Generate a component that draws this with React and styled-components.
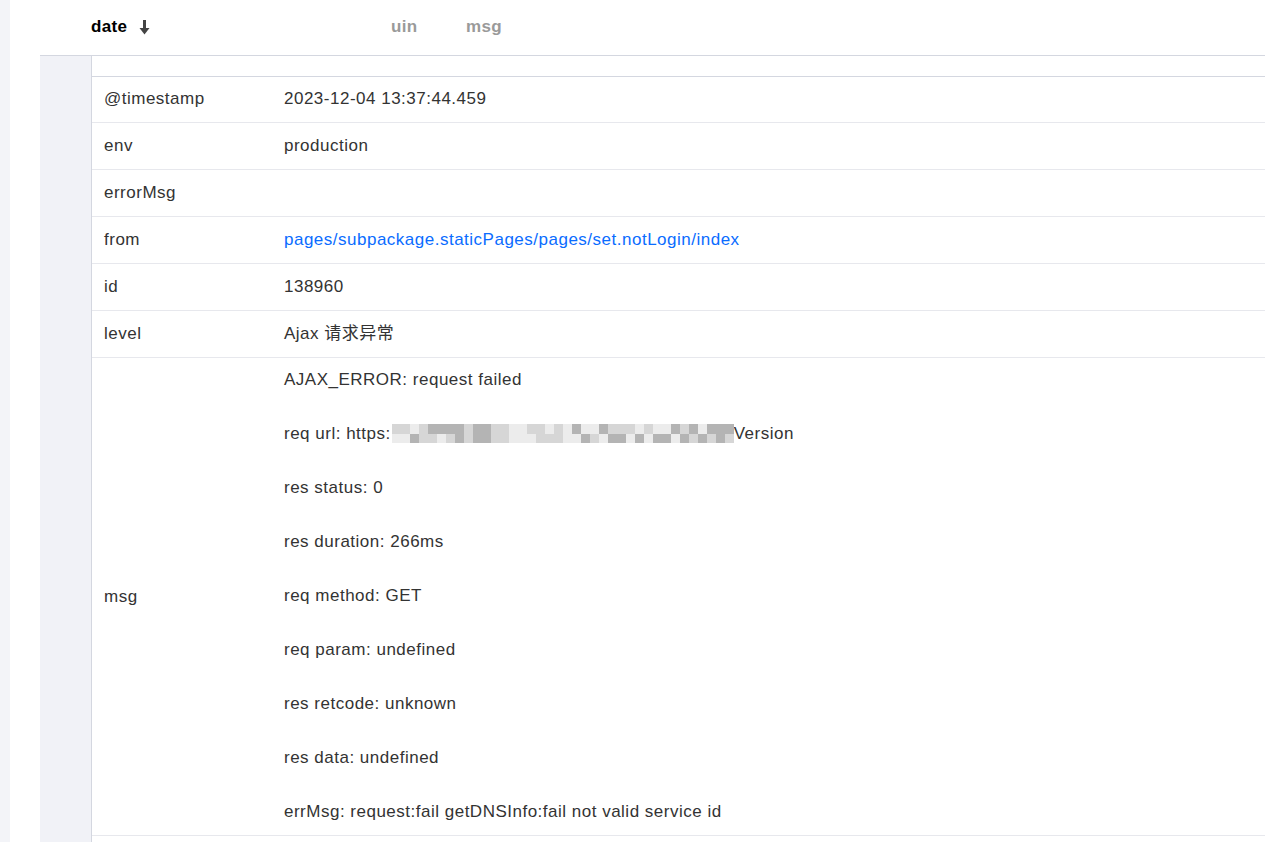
import React from "react";
import styled, { createGlobalStyle } from "styled-components";

const GlobalStyle = createGlobalStyle`
  html, body {
    margin: 0;
    padding: 0;
    background: #ffffff;
    font-family: "Liberation Sans", Arial, "Noto Sans CJK SC", sans-serif;
    color: #333333;
  }
`;

const Page = styled.div`
  display: flex;
  min-height: 842px;
  background: #fff;
`;

const SideStrip = styled.div`
  width: 10px;
  flex-shrink: 0;
  background: #f3f4f8;
`;

const Content = styled.div`
  flex: 1;
  padding-left: 30px;
  display: flex;
  flex-direction: column;
`;

const HeaderBar = styled.div`
  height: 55px;
  border-bottom: 1px solid #d4d7e0;
  display: flex;
  align-items: center;
  padding-left: 51px;
  font-size: 17px;
  letter-spacing: 0.3px;
  font-weight: bold;
`;

const HeadCell = styled.div`
  display: flex;
  align-items: center;
  gap: 12px;
  width: ${(p) => p.$width}px;
  color: ${(p) => (p.$active ? "#000000" : "#9a9a9a")};
  padding-bottom: 1px;
`;

const Body = styled.div`
  display: flex;
  flex: 1;
`;

const Gutter = styled.div`
  width: 51px;
  flex-shrink: 0;
  background: #f1f2f7;
  border-right: 1px solid #d4d7e0;
`;

const Detail = styled.div`
  flex: 1;
  display: flex;
  flex-direction: column;
`;

const Spacer = styled.div`
  height: 20px;
  border-bottom: 1px solid #d4d7e0;
`;

const Row = styled.div`
  display: flex;
  align-items: center;
  border-bottom: 1px solid #e7e8ed;
  font-size: 17px;
  letter-spacing: 0.5px;
  line-height: 22px;
`;

const Key = styled.div`
  width: 192px;
  flex-shrink: 0;
  padding: ${(p) => (p.$compact ? "11px 12px 12px" : "12px")};
  box-sizing: border-box;
  min-height: ${(p) => (p.$compact ? 45 : 46)}px;
`;

const Value = styled.div`
  flex: 1;
  padding: ${(p) =>
    p.$tall ? "11px 0 12px" : p.$compact ? "11px 0 12px" : "12px 0"};
  min-height: ${(p) => (p.$compact ? 45 : 46)}px;
  box-sizing: border-box;
  color: ${(p) => (p.$link ? "#0a6cff" : "#333333")};
  display: flex;
  flex-direction: column;
  gap: 32px;
`;

const Line = styled.div`
  white-space: nowrap;
`;

const Mosaic = styled.span`
  display: inline-grid;
  grid-template-columns: repeat(38, 9px);
  grid-template-rows: 10px 9px;
  vertical-align: middle;
  margin: 0 0 0 1px;
  position: relative;
  top: -1px;
`;

const Cell = styled.span`
  display: block;
`;

const shades = [
  "#d6d6d6", "#bdbdbd", "#f4f4f4", "#c8c8c8", "#ececec", "#a8a8a8",
  "#cfcfcf", "#dcdcdc", "#b4b4b4", "#fafafa", "#c2c2c2", "#9c9c9c",
];

const MosaicBlock = () => {
  const cells = [];
  let seed = 7;
  for (let i = 0; i < 76; i++) {
    seed = (seed * 1103515245 + 12345) % 2147483648;
    const v = seed % shades.length;
    cells.push(<Cell key={i} style={{ background: shades[v] }} />);
  }
  return <Mosaic>{cells}</Mosaic>;
};

const SortArrow = () => (
  <svg width="11" height="15" viewBox="0 0 11 15">
    <rect x="4" y="0" width="3" height="9" fill="#444" />
    <path d="M0.5 8 L10.5 8 L5.5 14.5 Z" fill="#444" />
  </svg>
);

const rows = [
  { k: "@timestamp", v: "2023-12-04 13:37:44.459" },
  { k: "env", v: "production" },
  { k: "errorMsg", v: "" },
  { k: "from", v: "pages/subpackage.staticPages/pages/set.notLogin/index", link: true },
  { k: "id", v: "138960" },
  { k: "level", v: "Ajax 请求异常" },
];

const msgLines = [
  "AJAX_ERROR: request failed",
  "url",
  "res status: 0",
  "res duration: 266ms",
  "req method: GET",
  "req param: undefined",
  "res retcode: unknown",
  "res data: undefined",
  "errMsg: request:fail getDNSInfo:fail not valid service id",
];

export default function App() {
  return (
    <>
      <GlobalStyle />
      <Page>
        <SideStrip />
        <Content>
          <HeaderBar>
            <HeadCell $active $width={300}>
              date <SortArrow />
            </HeadCell>
            <HeadCell $width={75}>uin</HeadCell>
            <HeadCell $width={80}>msg</HeadCell>
          </HeaderBar>
          <Body>
            <Gutter />
            <Detail>
              <Spacer />
              {rows.map((r, i) => (
                <Row key={r.k}>
                  <Key $compact={i === 0}>{r.k}</Key>
                  <Value $compact={i === 0} $link={r.link}>
                    {r.v}
                  </Value>
                </Row>
              ))}
              <Row>
                <Key>msg</Key>
                <Value $tall>
                  {msgLines.map((l) =>
                    l === "url" ? (
                      <Line key={l}>
                        req url: https:
                        <MosaicBlock />
                        Version
                      </Line>
                    ) : (
                      <Line key={l}>{l}</Line>
                    )
                  )}
                </Value>
              </Row>
            </Detail>
          </Body>
        </Content>
      </Page>
    </>
  );
}
